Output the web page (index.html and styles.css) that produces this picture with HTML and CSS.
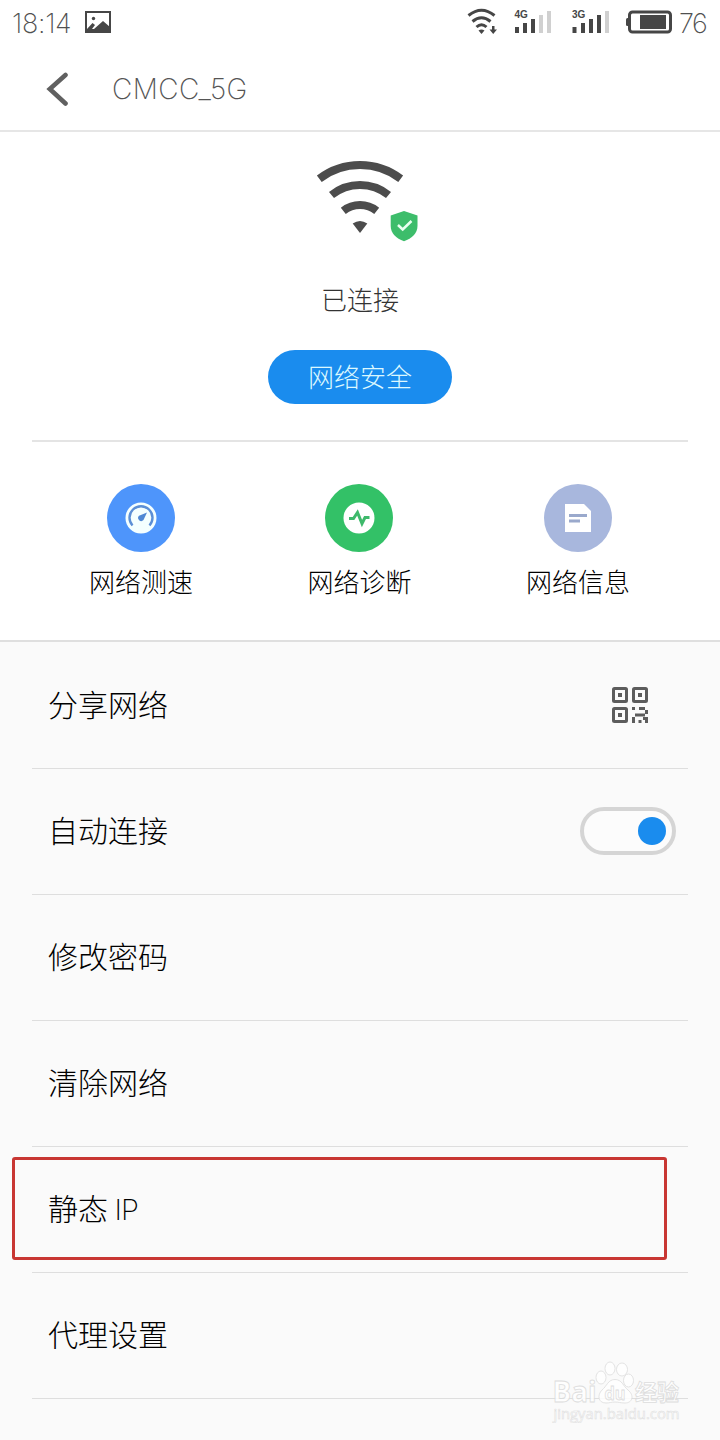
FILE: index.html
```
<!DOCTYPE html>
<html lang="zh-CN">

<head>
	<meta charset="utf-8">
	<title>CMCC_5G</title>
	<link rel="stylesheet" href="styles.css">
</head>

<body>
	<div class="phone">
		<!-- 状态栏 -->
		<div class="status">
			<span class="time">18:14</span>
			<svg class="pic" width="26" height="22" viewBox="0 0 26 22">
				<rect x="1" y="1" width="24" height="20" fill="none" stroke="#464646" stroke-width="2"/>
				<circle cx="8.500" cy="7.500" r="1.700" fill="#464646"/>
				<path d="M2 21V18L7.500 12L10 14L7 18L9 18L18 10L25 16V21Z" fill="#464646"/>
			</svg>
			<svg class="signals" width="206" height="28" viewBox="0 0 206 28">
				<g fill="none" stroke="#464646" stroke-width="3">
					<path d="M1.500 7.500Q14.500 -3 27.500 7.500"/>
					<path d="M5.500 13.500Q14.500 6 23.500 13.500"/>
					<path d="M9.500 19Q14.500 14.500 19.500 19"/>
				</g>
				<path d="M11.500 22.500Q14.500 20.500 17.500 22.500L14.500 26Z" fill="#464646"/>
				<path d="M25 18H27.500V21.500H30L26.200 26L22.500 21.500H25Z" fill="#464646"/>
				<g fill="#464646">
					<rect x="48" y="19" width="4" height="6"/>
					<rect x="56" y="15" width="4" height="10"/>
					<rect x="64" y="11" width="4" height="14"/>
					<rect x="105.500" y="19" width="4" height="6"/>
					<rect x="114" y="15" width="4" height="10"/>
					<rect x="122" y="11" width="4" height="14"/>
					<rect x="130" y="7" width="4" height="18"/>
				</g>
				<g fill="#d0d0d0">
					<rect x="72" y="7" width="4" height="18"/>
					<rect x="80" y="3" width="4" height="22"/>
					<rect x="138" y="3" width="4" height="22"/>
				</g>
				<text class="net" x="47.500" y="10">4G</text>
				<text class="net" x="105" y="10">3G</text>
				<rect x="162.500" y="4" width="41" height="20" rx="3" fill="none" stroke="#464646" stroke-width="3"/>
				<path d="M162 10H160.500Q159 10 159 11.500V17Q159 18 160.500 18H162Z" fill="#464646"/>
				<rect x="173" y="7" width="26" height="14" fill="#464646"/>
			</svg>
			<span class="power">76</span>
		</div>

		<!-- 标题栏 -->
		<div class="header">
			<svg width="22" height="34" viewBox="0 0 22 34">
				<path d="M19.500 3L3.800 17L19.500 31.500" fill="none" stroke="#606060" stroke-width="4.600" stroke-linecap="round"/>
			</svg>
			<span class="title">CMCC_5G</span>
		</div>

		<!-- 连接状态 -->
		<div class="connect">
			<svg width="120" height="84" viewBox="300 160 120 84">
				<g fill="none" stroke="#4c4c4c" stroke-width="8">
					<path d="M319.300 178.700A67.300 67.300 0 0 1 400.700 178.700"/>
					<path d="M331.500 195A45.600 45.600 0 0 1 388.500 195"/>
					<path d="M343.300 210.800A27 27 0 0 1 376.700 210.800"/>
				</g>
				<path d="M352.700 223.500Q360 218.500 367.300 223.500L360 233Z" fill="#4c4c4c"/>
				<path d="M404 211L417.500 215.500V226C417.500 233 412 238.500 404 241.200C396 238.500 390.700 233 390.700 226V215.500Z" fill="#3dbd6b"/>
				<path d="M398 225L402.700 229.500L411.500 221" fill="none" stroke="#e9fff0" stroke-width="2.500"/>
			</svg>
			<p class="state">已连接</p>
			<a class="safe" href="#">网络安全</a>
		</div>

		<div class="tools">
			<a class="tool" href="#">
				<svg width="68" height="68" viewBox="0 0 68 68">
					<circle cx="34" cy="34" r="34" fill="#4e95fb"/>
					<circle cx="34" cy="34" r="15.500" fill="#f4ffff"/>
					<path d="M25.500 41.500A11.500 11.500 0 1 1 42.500 41.500" fill="none" stroke="#5b8fd6" stroke-width="2.400"/>
					<path d="M40 28.500L36.500 36A3 3 0 1 1 32 31.800Z" fill="#4f88d4"/>
				</svg>
				<span>网络测速</span>
			</a>
			<a class="tool" href="#">
				<svg width="68" height="68" viewBox="0 0 68 68">
					<circle cx="34" cy="34" r="34" fill="#33c167"/>
					<circle cx="34" cy="34" r="15.500" fill="#fff"/>
					<path d="M24 34.500H28.500L32.500 28.500L37 39.500L40 33.500H44.500" fill="none" stroke="#3eb96b" stroke-width="3"/>
				</svg>
				<span>网络诊断</span>
			</a>
			<a class="tool" href="#">
				<svg width="68" height="68" viewBox="0 0 68 68">
					<circle cx="34" cy="34" r="34" fill="#a8b7dd"/>
					<path d="M21 20H40L47 27V48H21Z" fill="#fff"/>
					<path d="M25 31.500H43M25 37H36" stroke="#9aa9cc" stroke-width="3"/>
				</svg>
				<span>网络信息</span>
			</a>
		</div>

		<!-- 设置列表 -->
		<ul class="list">
			<li>
				<span>分享网络</span>
				<svg class="qr" width="36" height="36" viewBox="0 0 36 36">
					<g fill="none" stroke="#5c5c5c" stroke-width="3">
						<rect x="1.500" y="1.500" width="13" height="13" rx="1"/>
						<rect x="21.500" y="1.500" width="13" height="13" rx="1"/>
						<rect x="1.500" y="21.500" width="13" height="13" rx="1"/>
					</g>
					<path fill="#5c5c5c" d="M6 6h4v4H6zM26 6h4v4h-4zM6 26h4v4H6zM20 20h3v3h-3zM27 20h6v3h-6zM33 23h3v4h-3zM23 26.500h10v3H23zM20 30h3v6h-3zM26.500 33h3v3h-3zM31 30h5v6h-3v-3h-2z"/>
				</svg>
			</li>
			<li>
				<span>自动连接</span>
				<i class="switch"></i>
			</li>
			<li><span>修改密码</span></li>
			<li><span>清除网络</span></li>
			<li class="static"><span>静态 <em>IP</em></span></li>
			<li><span>代理设置</span></li>
		</ul>

		<!-- 右下角水印 -->
		<svg class="mark" width="140" height="66" viewBox="0 0 140 66">
			<g fill="#fff" stroke="#d8d8d8" stroke-width=".8">
				<text class="baidu" x="11.500" y="41.500" textLength="44" lengthAdjust="spacingAndGlyphs">Bai</text>
				<ellipse cx="60" cy="17.500" rx="5" ry="6.500"/>
				<ellipse cx="69" cy="8.500" rx="5" ry="6.500"/>
				<ellipse cx="81" cy="9.500" rx="5.500" ry="6.500"/>
				<ellipse cx="87.500" cy="20.500" rx="5" ry="6.500"/>
				<path d="M74 19.500C81 19.500 82 26 87 30C94 36 91 43 84 43C79 43 78 42 74 42C70 42 69 43 65 43C57 43 56 35 61 30C66 26 67 19.500 74 19.500Z"/>
				<text class="du" x="63.500" y="39.500" textLength="21" lengthAdjust="spacingAndGlyphs">du</text>
				<text class="jingyan" x="94" y="40" textLength="44">经验</text>
				<text class="site" x="12.500" y="58.500" textLength="126" lengthAdjust="spacingAndGlyphs">jingyan.baidu.com</text>
			</g>
		</svg>
	</div>
</body>

</html>
```
FILE: styles.css
```
* {padding: 0; margin: 0; box-sizing: border-box;}
body{font-family: "Inter", "Noto Sans CJK SC", sans-serif; font-weight: 300; background: #fafafa;}
a{text-decoration: none; color: inherit;}
svg{display: block; flex: none;}
.phone{position: relative; width: 720px; height: 1440px; overflow: hidden; background: #fafafa;}

/*状态栏*/
.status{display: flex; height: 46px; padding: 8px 12px 0 12px; background: #fff; color: #505050;}
.time,.power{font-family: "Inter", sans-serif; font-size: 27px; line-height: 32px; font-weight: 200; white-space: nowrap;}
.time{width: 59px; letter-spacing: -.3px;}
.pic{margin: 3px 0 0 14px;}
.signals{margin: 0 0 0 auto;}
.power{width: 29px; margin-left: 6px; letter-spacing: -1.5px;}
.net{font: 700 10px "Liberation Sans", sans-serif; fill: #464646;}

/*标题栏*/
.header{display: flex; align-items: center; height: 86px; padding: 1px 46px 0; background: #fff; border-bottom: 2px solid #e6e6e6;}
.title{margin-left: 44px; font-size: 28px; font-weight: 200; color: #555; letter-spacing: .4px;}

/*连接状态*/
.connect{display: flex; flex-direction: column; align-items: center; height: 310px; padding-top: 28px; background: #fff;}
.state{margin-top: 38px; font-size: 26px; line-height: 38px; color: #333;}
.safe{width: 184px; height: 54px; margin-top: 30px; border-radius: 27px; background: #1a8cee; color: #dcf8ff; font-size: 26px; line-height: 55px; text-align: center;}
.connect::after{content: ""; width: 656px; height: 2px; margin-top: 36px; background: #e4e4e4;}

.tools{display: flex; justify-content: space-between; height: 200px; padding: 42px 90px 0 89px; background: #fff; border-bottom: 2px solid #dfdfdf;}
.tool{display: flex; flex-direction: column; align-items: center; font-size: 26px; line-height: 38px; color: #000;}
.tool span{margin-top: 12px;}

/*设置列表*/
.list{padding: 0 32px; list-style: none;}
.list li{display: flex; align-items: center; justify-content: space-between; height: 126px; padding: 0 16px; border-bottom: 1px solid #dedede; font-size: 30px; color: #000; position: relative;}
.list li:first-child{height: 127px;}
.list li span{padding-bottom: 5px;}
.list em{margin-left: -2px; font-style: normal; font-size: 29px; font-weight: 200; letter-spacing: -.8px;}
.qr{margin-right: 24px;}
.switch{width: 96px; height: 48px; margin: 0 -4px 2px 0; padding: 6px; border: 4px solid #d5d5d5; border-radius: 24px; background: #fcfcfc;}
.switch::after{content: ""; display: block; width: 28px; height: 28px; margin-left: auto; border-radius: 50%; background: #1a8cee;}
/*红框标出静态IP这一行*/
.static::after{content: ""; position: absolute; left: -20px; top: 10px; width: 649px; height: 97px; border: 3px solid #c83632; border-radius: 3px;}

.mark{position: absolute; left: 541px; top: 1360px; opacity: .85;}
.baidu{font: 700 28px "Open Sans", sans-serif;}
.du{font: 700 18px "Open Sans", sans-serif;}
.jingyan{font: 700 22px "Noto Sans CJK SC", sans-serif;}
.site{font: 400 14px "Open Sans", sans-serif; stroke-width: .5;}
```
